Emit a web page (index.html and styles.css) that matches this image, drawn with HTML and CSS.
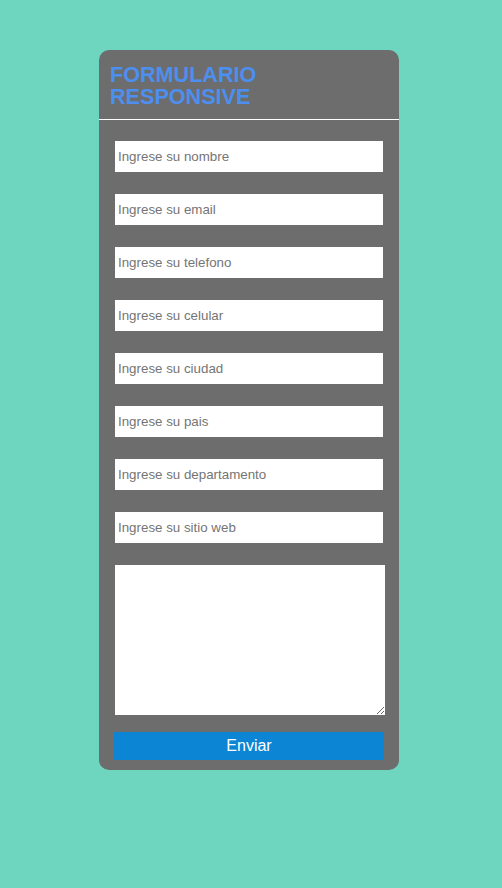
FILE: index.html
```html
<!DOCTYPE html>
<html lang="es">
<head>
<meta charset="utf-8">
<title>Formulario Responsive</title>
<link rel="stylesheet" href="styles.css">
</head>
<body>
<div class="page">
  <form class="card">
    <div class="card-header">
      <h1 class="title">FORMULARIO<br>RESPONSIVE</h1>
    </div>
    <div class="card-body">
      <input class="field" type="text" placeholder="Ingrese su nombre">
      <input class="field" type="text" placeholder="Ingrese su email">
      <input class="field" type="text" placeholder="Ingrese su telefono">
      <input class="field" type="text" placeholder="Ingrese su celular">
      <input class="field" type="text" placeholder="Ingrese su ciudad">
      <input class="field" type="text" placeholder="Ingrese su pais">
      <input class="field" type="text" placeholder="Ingrese su departamento">
      <input class="field" type="text" placeholder="Ingrese su sitio web">
      <textarea class="message"></textarea>
      <button class="submit" type="button">Enviar</button>
    </div>
  </form>
</div>
</body>
</html>
```

FILE: styles.css
```css
html, body {
  margin: 0;
  padding: 0;
}

body {
  background: #6ed6bf;
  font-family: "Liberation Sans", Arial, sans-serif;
  min-height: 888px;
}

.page {
  padding: 50px 4px 0 0;
}

.card {
  width: 300px;
  margin: 0 auto;
  background: #6d6d6d;
  border-radius: 10px;
  display: flex;
  flex-direction: column;
}

.card-header {
  padding: 14px 11px 11px;
  border-bottom: 1px solid #ffffff;
}

.title {
  margin: 0;
  font-size: 21.6px;
  line-height: 22px;
  font-weight: bold;
  color: #4c8ff0;
}

.card-body {
  padding: 21px 0 10px 16px;
  display: flex;
  flex-direction: column;
  align-items: flex-start;
}

.field {
  box-sizing: border-box;
  width: 268px;
  height: 31px;
  border: none;
  outline: none;
  margin: 0 0 22px 0;
  padding: 0 3px;
  background: #ffffff;
  font-family: "Liberation Sans", Arial, sans-serif;
  font-size: 13.33px;
  color: #333;
}

.field::placeholder {
  color: #757575;
}

.message {
  box-sizing: border-box;
  display: block;
  width: 270px;
  height: 150px;
  border: none;
  outline: none;
  margin: 0 0 17px 0;
  padding: 3px;
  background: #ffffff;
  font-family: "Liberation Sans", Arial, sans-serif;
  font-size: 13.33px;
}

.submit {
  box-sizing: border-box;
  width: 270px;
  height: 28px;
  margin-left: -1px;
  border: none;
  padding: 0;
  background: #0b85d4;
  color: #ffffff;
  font-family: "Liberation Sans", Arial, sans-serif;
  font-size: 16px;
  cursor: pointer;
}
```
